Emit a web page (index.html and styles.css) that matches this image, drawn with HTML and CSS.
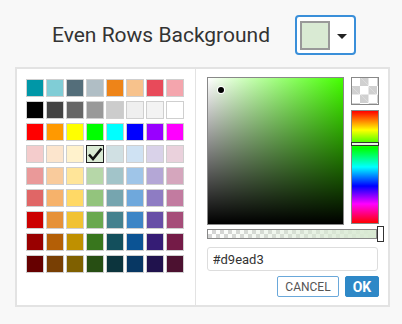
FILE: index.html
```html
<!DOCTYPE html>
<html lang="en">
  <head>
    <meta charset="utf-8" />
    <title>even rows background</title>
    <link rel="stylesheet" href="styles.css">
  </head>
  <body>
    <header class="setting">
      <span class="setting-label">Even Rows Background</span>
      <button class="picker-toggle">
        <span class="picker-current"></span>
        <span class="caret"></span>
      </button>
    </header>
    <main class="picker">
      <section class="palette">
        <div class="swatch-row">
          <span class="swatch" style="background:#0097a7"></span>
          <span class="swatch" style="background:#80cdd6"></span>
          <span class="swatch" style="background:#546e7a"></span>
          <span class="swatch" style="background:#b0bec5"></span>
          <span class="swatch" style="background:#ee8418"></span>
          <span class="swatch" style="background:#f7c28c"></span>
          <span class="swatch" style="background:#e84a5a"></span>
          <span class="swatch" style="background:#f4a5ad"></span>
        </div>
        <div class="swatch-row">
          <span class="swatch" style="background:#000000"></span>
          <span class="swatch" style="background:#434343"></span>
          <span class="swatch" style="background:#666666"></span>
          <span class="swatch" style="background:#999999"></span>
          <span class="swatch" style="background:#cccccc"></span>
          <span class="swatch" style="background:#efefef"></span>
          <span class="swatch" style="background:#f3f3f3"></span>
          <span class="swatch" style="background:#ffffff"></span>
        </div>
        <div class="swatch-row">
          <span class="swatch" style="background:#ff0000"></span>
          <span class="swatch" style="background:#ff9900"></span>
          <span class="swatch" style="background:#ffff00"></span>
          <span class="swatch" style="background:#00ff00"></span>
          <span class="swatch" style="background:#00ffff"></span>
          <span class="swatch" style="background:#0000ff"></span>
          <span class="swatch" style="background:#9900ff"></span>
          <span class="swatch" style="background:#ff00ff"></span>
        </div>
        <div class="swatch-row">
          <span class="swatch" style="background:#f4cccc"></span>
          <span class="swatch" style="background:#fce5cd"></span>
          <span class="swatch" style="background:#fff2cc"></span>
          <span class="swatch selected" style="background:#d9ead3">
            <svg class="check" viewBox="0 0 16 16" width="16" height="16"><path d="M2 8.5 L6 13 L14.5 2.5" fill="none" stroke="#111" stroke-width="2.6" stroke-linejoin="miter"/></svg>
          </span>
          <span class="swatch" style="background:#d0e0e3"></span>
          <span class="swatch" style="background:#cfe2f3"></span>
          <span class="swatch" style="background:#d9d2e9"></span>
          <span class="swatch" style="background:#ead1dc"></span>
        </div>
        <div class="swatch-row">
          <span class="swatch" style="background:#ea9999"></span>
          <span class="swatch" style="background:#f9cb9c"></span>
          <span class="swatch" style="background:#ffe599"></span>
          <span class="swatch" style="background:#b6d7a8"></span>
          <span class="swatch" style="background:#a2c4c9"></span>
          <span class="swatch" style="background:#9fc5e8"></span>
          <span class="swatch" style="background:#b4a7d6"></span>
          <span class="swatch" style="background:#d5a6bd"></span>
        </div>
        <div class="swatch-row">
          <span class="swatch" style="background:#e06666"></span>
          <span class="swatch" style="background:#f6b26b"></span>
          <span class="swatch" style="background:#ffd966"></span>
          <span class="swatch" style="background:#93c47d"></span>
          <span class="swatch" style="background:#76a5af"></span>
          <span class="swatch" style="background:#6fa8dc"></span>
          <span class="swatch" style="background:#8e7cc3"></span>
          <span class="swatch" style="background:#c27ba0"></span>
        </div>
        <div class="swatch-row">
          <span class="swatch" style="background:#cc0000"></span>
          <span class="swatch" style="background:#e69138"></span>
          <span class="swatch" style="background:#f1c232"></span>
          <span class="swatch" style="background:#6aa84f"></span>
          <span class="swatch" style="background:#45818e"></span>
          <span class="swatch" style="background:#3d85c6"></span>
          <span class="swatch" style="background:#674ea7"></span>
          <span class="swatch" style="background:#a64d79"></span>
        </div>
        <div class="swatch-row">
          <span class="swatch" style="background:#990000"></span>
          <span class="swatch" style="background:#b45f06"></span>
          <span class="swatch" style="background:#bf9000"></span>
          <span class="swatch" style="background:#38761d"></span>
          <span class="swatch" style="background:#134f5c"></span>
          <span class="swatch" style="background:#0b5394"></span>
          <span class="swatch" style="background:#351c75"></span>
          <span class="swatch" style="background:#741b47"></span>
        </div>
        <div class="swatch-row">
          <span class="swatch" style="background:#660000"></span>
          <span class="swatch" style="background:#783f04"></span>
          <span class="swatch" style="background:#7f6000"></span>
          <span class="swatch" style="background:#274e13"></span>
          <span class="swatch" style="background:#0c343d"></span>
          <span class="swatch" style="background:#073763"></span>
          <span class="swatch" style="background:#20124d"></span>
          <span class="swatch" style="background:#4c1130"></span>
        </div>
      </section>
      <section class="custom">
        <div class="custom-top">
          <div class="sv-box">
            <span class="sv-dot"></span>
          </div>
          <div class="side">
            <div class="alpha-preview"></div>
            <div class="hue-bar">
              <span class="hue-handle"></span>
            </div>
          </div>
        </div>
        <div class="alpha-bar">
          <span class="alpha-handle"></span>
        </div>
        <input class="hex-input" type="text" value="#d9ead3">
        <div class="actions">
          <button class="btn btn-cancel">CANCEL</button>
          <button class="btn btn-ok">OK</button>
        </div>
      </section>
    </main>
  </body>
</html>
```

FILE: styles.css
```css
body {
  margin: 0;
  background-color: #f8f8f8;
  font-family: Roboto, "Liberation Sans", sans-serif;
  color: #333;
}

.setting {
  display: flex;
  align-items: center;
  gap: 25px;
  height: 67px;
  padding: 15px 0 12px 52px;
  box-sizing: border-box;
}

.setting-label {
  font-size: 21px;
  line-height: 40px;
  height: 40px;
  color: #333;
}

.picker-toggle {
  display: flex;
  align-items: center;
  width: 61px;
  height: 40px;
  padding: 0 0 0 3px;
  border: 2px solid #3a8fd9;
  border-radius: 4px;
  background-color: #fff;
  box-sizing: border-box;
}

.picker-current {
  width: 30px;
  height: 29px;
  border: 2px solid #999;
  background-color: #d9ead3;
  box-sizing: border-box;
}

.caret {
  margin-left: 7px;
  margin-top: 3px;
  border-left: 5px solid transparent;
  border-right: 5px solid transparent;
  border-top: 5px solid #222;
}

.picker {
  display: flex;
  width: 375px;
  height: 240px;
  margin-left: 15px;
  border: 2px solid #e3e3e3;
  box-sizing: border-box;
  background-color: #fff;
}

.palette {
  width: 179px;
  padding: 8px 0 0 8px;
  border-right: 1px solid #e3e3e3;
  box-sizing: border-box;
}

.swatch-row {
  display: flex;
}

.swatch {
  display: flex;
  align-items: center;
  justify-content: center;
  width: 18px;
  height: 18px;
  margin: 2px 1px;
  border: 1px solid #cfcfcf;
  box-sizing: border-box;
}

.swatch.selected {
  border-color: #222;
}

.custom {
  padding: 8px 9px 0 11px;
  box-sizing: border-box;
  width: 193px;
}

.custom-top {
  display: flex;
  gap: 7px;
}

.sv-box {
  position: relative;
  width: 137px;
  height: 148px;
  border: 1px solid #888;
  box-sizing: border-box;
  background:
    linear-gradient(to top, #000, rgba(0, 0, 0, 0)),
    linear-gradient(to right, #fff, hsl(104, 100%, 50%));
}

.sv-dot {
  position: absolute;
  left: 10px;
  top: 9px;
  width: 6px;
  height: 6px;
  border-radius: 50%;
  background-color: #000;
  box-shadow: 0 0 0 1px #fff;
}

.side {
  display: flex;
  flex-direction: column;
  gap: 5px;
}

.alpha-preview {
  width: 28px;
  height: 28px;
  border: 1px solid #888;
  box-sizing: border-box;
  background-color: #fff;
  background-image:
    linear-gradient(45deg, #d0d0d0 25%, transparent 25%, transparent 75%, #d0d0d0 75%),
    linear-gradient(45deg, #d0d0d0 25%, transparent 25%, transparent 75%, #d0d0d0 75%);
  background-size: 17px 17px;
  background-position: -0.5px -0.5px, 8px 8px;
}

.hue-bar {
  position: relative;
  width: 28px;
  height: 114px;
  border: 1px solid #888;
  box-sizing: border-box;
  background: linear-gradient(to bottom, #f00, #ff0 17%, #0f0 33%, #0ff 50%, #00f 67%, #f0f 83%, #f00);
}

.hue-handle {
  position: absolute;
  left: -1px;
  right: -1px;
  top: 31px;
  height: 4px;
  border: 1px solid #333;
  background-color: #e8f5e2;
  box-sizing: border-box;
}

.alpha-bar {
  position: relative;
  width: 170px;
  height: 10px;
  margin-top: 4px;
  border: 1px solid #888;
  box-sizing: border-box;
  background-color: #fff;
  background-image:
    linear-gradient(to right, rgba(217, 234, 211, 0), #d9ead3),
    linear-gradient(45deg, #d4d4d4 25%, transparent 25%, transparent 75%, #d4d4d4 75%),
    linear-gradient(45deg, #d4d4d4 25%, transparent 25%, transparent 75%, #d4d4d4 75%);
  background-size: 100% 100%, 8px 8px, 8px 8px;
  background-position: 0 0, 0 0, 4px 4px;
}

.alpha-handle {
  position: absolute;
  left: 169px;
  top: -4px;
  width: 7px;
  height: 16px;
  border: 1px solid #333;
  background-color: #fff;
  box-sizing: border-box;
}

.hex-input {
  display: block;
  width: 171px;
  height: 24px;
  margin-top: 8px;
  padding: 0 5px;
  border: 1px solid #ddd;
  border-radius: 3px;
  box-sizing: border-box;
  font-family: Roboto, "Liberation Sans", sans-serif;
  font-size: 13px;
  color: #333;
}

.actions {
  display: flex;
  justify-content: flex-end;
  gap: 6px;
  margin-top: 5px;
}

.btn {
  height: 21px;
  padding: 0;
  border-radius: 2px;
  font-family: Roboto, "Liberation Sans", sans-serif;
  font-size: 12px;
  box-sizing: border-box;
}

.btn-cancel {
  width: 62px;
  border: 1px solid #6aa8da;
  background-color: #fff;
  color: #555;
}

.btn-ok {
  width: 34px;
  border: 1px solid #2e88c7;
  background-color: #2e88c7;
  color: #fff;
  font-weight: bold;
  font-size: 14px;
}
```
